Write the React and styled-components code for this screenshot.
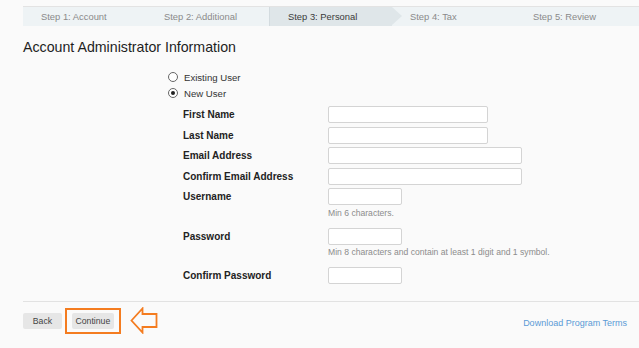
import styled, { createGlobalStyle } from 'styled-components';

const GlobalStyle = createGlobalStyle`
  html, body {
    margin: 0;
    padding: 0;
    background: #fafafa;
    overflow: hidden;
  }
  body {
    font-family: "Liberation Sans", Arial, sans-serif;
  }
`;

const steps = ['Step 1: Account', 'Step 2: Additional', 'Step 3: Personal', 'Step 4: Tax', 'Step 5: Review'];

const fields = [
  { label: 'First Name', width: 160 },
  { label: 'Last Name', width: 160 },
  { label: 'Email Address', width: 194 },
  { label: 'Confirm Email Address', width: 194 },
  { label: 'Username', width: 74, hint: 'Min 6 characters.' },
  { label: 'Password', width: 74, hint: 'Min 8 characters and contain at least 1 digit and 1 symbol.' },
  { label: 'Confirm Password', width: 74 },
];

const App = () => {
  return (
    <Page>
      <GlobalStyle />
      <StepBar>
        {steps.map((s, i) => (
          <Step key={s} $active={i === 2}>{s}</Step>
        ))}
      </StepBar>

      <Heading>Account Administrator Information</Heading>

      <RadioGroup>
        <RadioRow>
          <Radio />
          Existing User
        </RadioRow>
        <RadioRow>
          <Radio $checked />
          New User
        </RadioRow>
      </RadioGroup>

      <Fields>
        {fields.map((f) => (
          <FieldRow key={f.label} $hasHint={!!f.hint}>
            <Label>{f.label}</Label>
            <Input style={{ width: f.width }} />
            {f.hint && <Hint>{f.hint}</Hint>}
          </FieldRow>
        ))}
      </Fields>

      <Footer>
        <Button>Back</Button>
        <Highlight>
          <Button>Continue</Button>
        </Highlight>
        <ArrowIcon width="28" height="27" viewBox="0 0 28 27">
          <path d="M1.5 13.5 L12.5 1.5 L12.5 7 L26.5 7 L26.5 20 L12.5 20 L12.5 25.5 Z" />
        </ArrowIcon>
        <DownloadLink href="#">Download Program Terms</DownloadLink>
      </Footer>
    </Page>
  );
};

const Page = styled.div`
  padding: 6px 0 0 23px;
  color: #222;
`;

const StepBar = styled.div`
  display: flex;
  height: 19px;
  border-top: 1px solid #e3e3e3;
  background: #eef3f5;
`;

const Step = styled.div`
  position: relative;
  flex: 0 0 123px;
  box-sizing: border-box;
  padding-left: 18px;
  display: flex;
  align-items: center;
  font-size: 9.4px;
  color: ${(p) => (p.$active ? '#3a3a3a' : '#8a8a8a')};
  background: ${(p) => (p.$active ? '#dfe6e9' : 'transparent')};
  border-left: ${(p) => (p.$active ? '1px solid #d3dbdf' : 'none')};

  &:last-child {
    flex: 1;
  }

  &::after {
    content: '';
    display: ${(p) => (p.$active ? 'block' : 'none')};
    position: absolute;
    top: 0;
    right: -10px;
    border-left: 10px solid #dfe6e9;
    border-top: 9.5px solid transparent;
    border-bottom: 9.5px solid transparent;
  }
`;

const Heading = styled.h1`
  margin: 12px 0 0;
  font-size: 14.2px;
  line-height: 18px;
  font-weight: normal;
  color: #1e1e1e;
`;

const RadioGroup = styled.div`
  margin: 13px 0 0 145px;
`;

const RadioRow = styled.div`
  display: flex;
  align-items: center;
  gap: 6px;
  height: 16px;
  font-size: 9.6px;
  color: #333;
`;

const Radio = styled.span`
  width: 8px;
  height: 8px;
  border: 1px solid #666;
  border-radius: 50%;
  background: #fff;
  display: flex;
  align-items: center;
  justify-content: center;

  &::after {
    content: '';
    display: ${(p) => (p.$checked ? 'block' : 'none')};
    width: 4px;
    height: 4px;
    border-radius: 50%;
    background: #222;
  }
`;

const Fields = styled.div`
  margin: 5px 0 0 160px;
`;

const FieldRow = styled.div`
  display: grid;
  grid-template-columns: 145px auto;
  align-items: center;
  row-gap: 2.5px;
  margin-bottom: ${(p) => (p.$hasHint ? '9px' : '3.5px')};
`;

const Label = styled.div`
  font-size: 10px;
  font-weight: bold;
  color: #222;
`;

const Input = styled.input`
  box-sizing: border-box;
  height: 17px;
  margin: 0;
  padding: 0 4px;
  border: 1px solid #d4d4d4;
  border-radius: 2px;
  background: #fff;
  outline: none;
`;

const Hint = styled.div`
  grid-column: 2;
  font-size: 8.6px;
  line-height: 11px;
  color: #8c8c8c;
`;

const Footer = styled.div`
  display: flex;
  align-items: center;
  margin-top: 17px;
  padding: 5px 12px 0 0;
  border-top: 1px solid #e2e2e2;
`;

const Button = styled.button`
  height: 16px;
  min-width: 39px;
  padding: 0 4px;
  border: none;
  border-radius: 2px;
  background: #e6e6e6;
  font-family: "Liberation Sans", Arial, sans-serif;
  font-size: 8.7px;
  color: #444;
  cursor: pointer;
`;

const Highlight = styled.div`
  margin-left: 3px;
  padding: 3px 4.5px;
  border: 2px solid #f47c20;
  display: flex;
`;

const ArrowIcon = styled.svg`
  margin-left: 9px;
  fill: none;
  stroke: #f47c20;
  stroke-width: 1.8;
  stroke-linejoin: miter;
`;

const DownloadLink = styled.a`
  margin-left: auto;
  margin-top: 4px;
  font-size: 9px;
  color: #5b9ad6;
  text-decoration: none;
`;

export default App;
